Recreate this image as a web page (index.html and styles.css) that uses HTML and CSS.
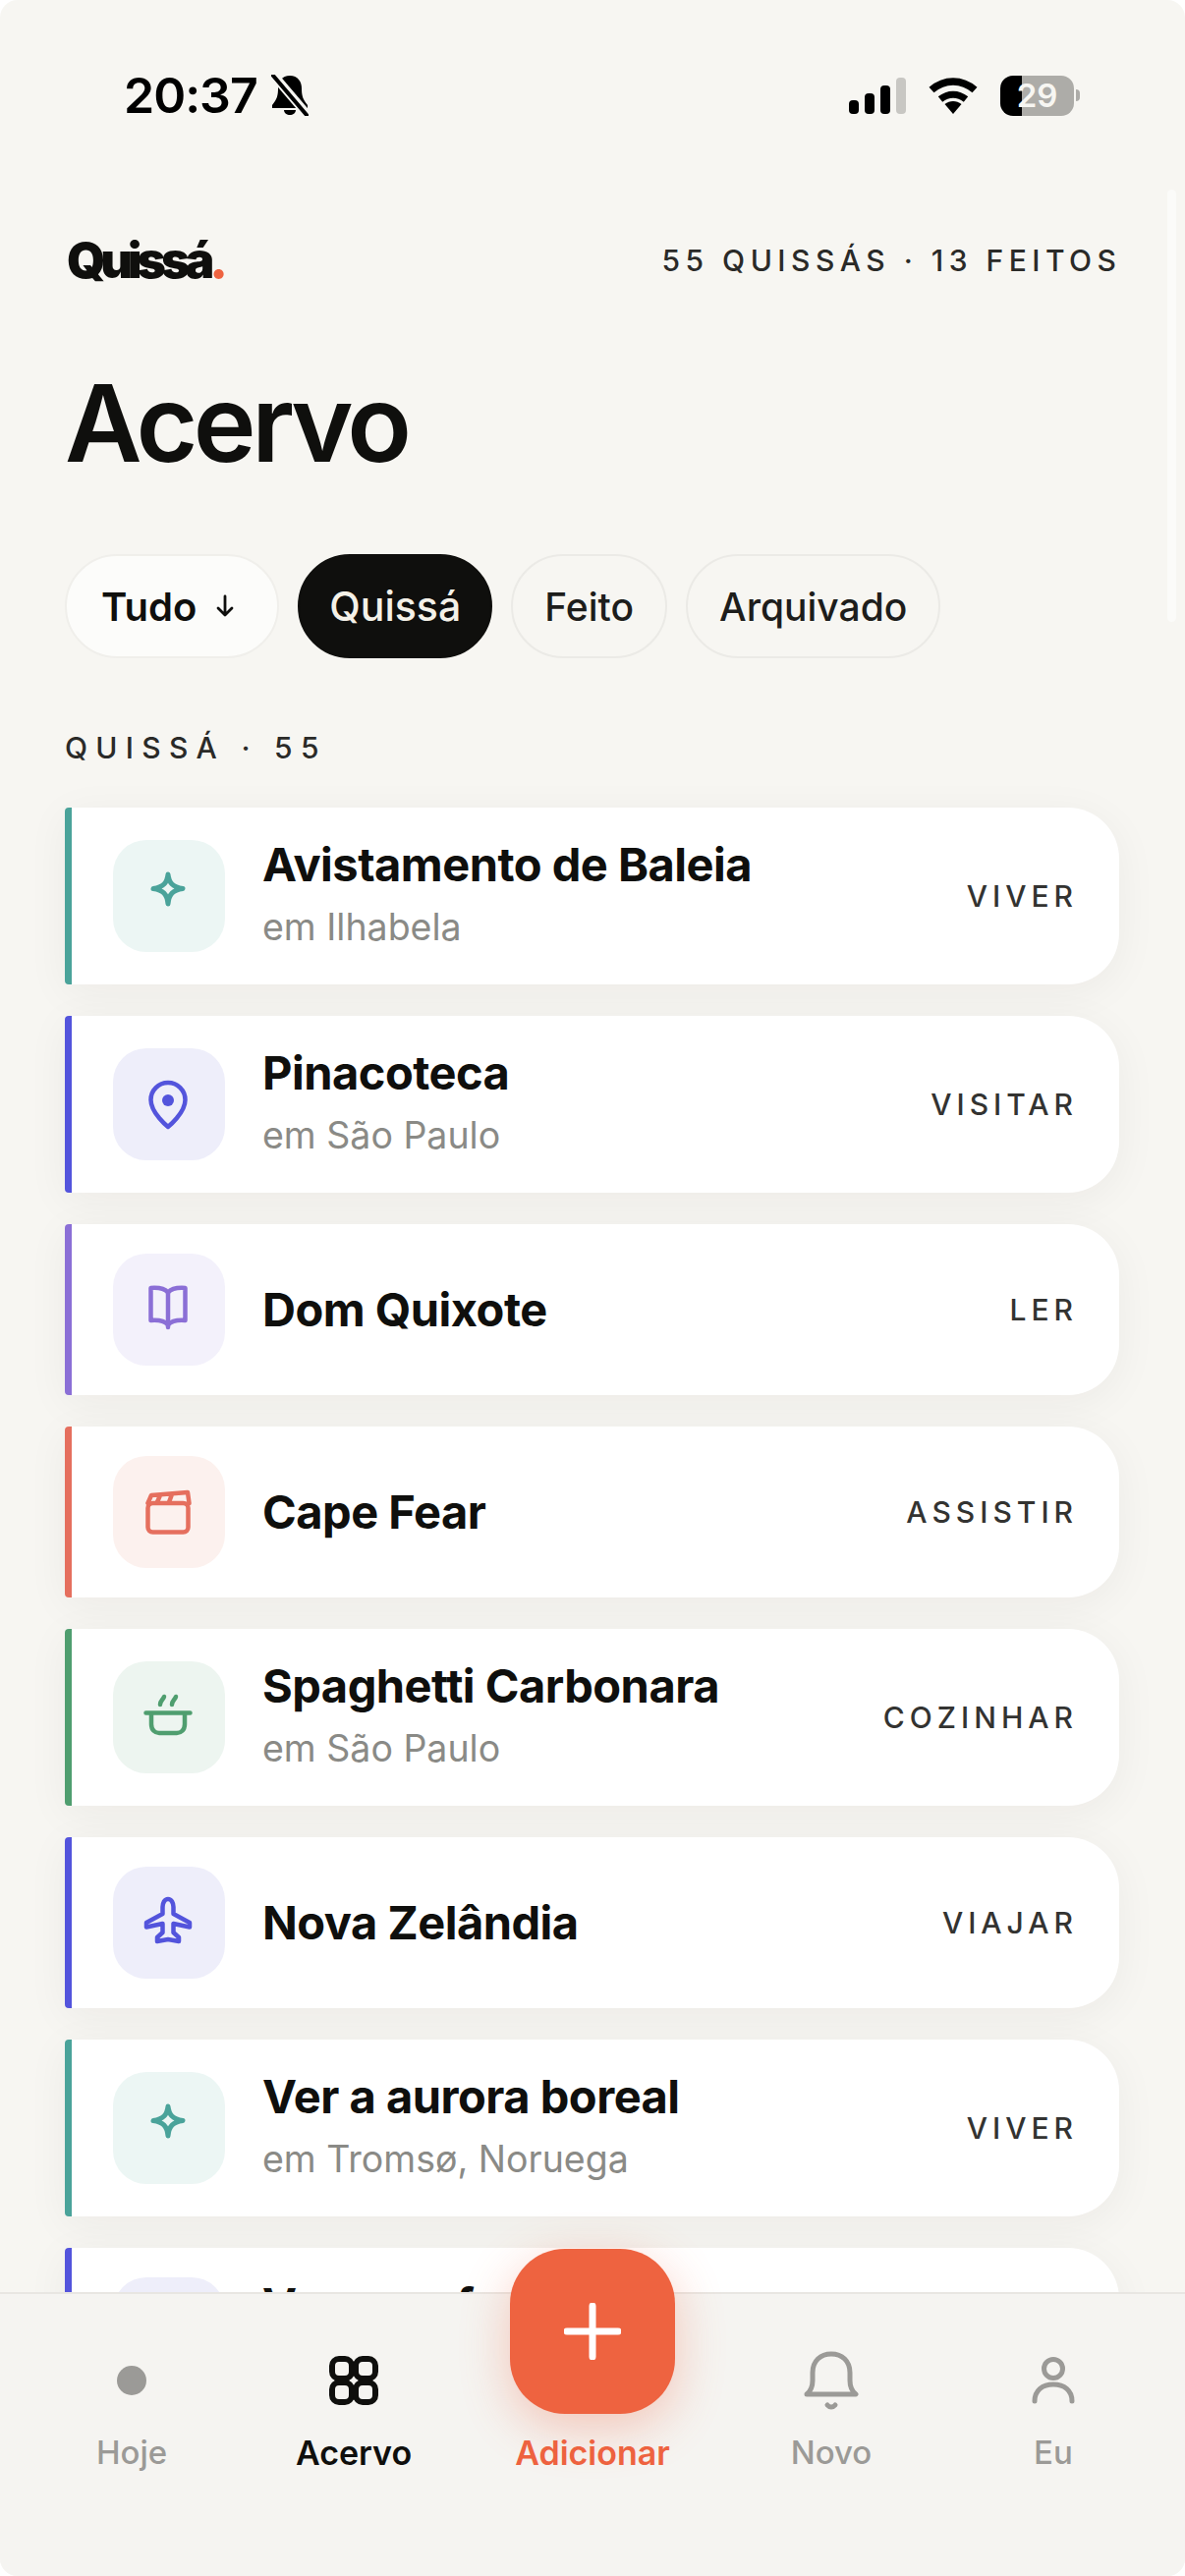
FILE: index.html
```html
<!DOCTYPE html>
<html lang="pt-BR">
<head>
<meta charset="UTF-8">
<title>Acervo</title>
<link rel="stylesheet" href="styles.css">
</head>
<body>
<div class="screen">
  <div class="status">
    <div class="status-left">
      <span class="clock">20:37</span>
      <svg class="muted" width="40" height="42" viewBox="0 0 40 42">
        <path d="M20 1c-8 0-12 6-12 13 0 7-1 11-6 17v3h36v-3c-5-6-6-10-6-17 0-7-4-13-12-13z" fill="#000"/>
        <path d="M14 36h12c0 3-3 5-6 5s-6-2-6-5z" fill="#000"/>
        <path d="M3 0l35 41" stroke="#f7f6f2" stroke-width="9"/>
        <path d="M3 1l34 40" stroke="#000" stroke-width="4" stroke-linecap="round"/>
      </svg>
    </div>
    <div class="status-right">
      <div class="signal">
        <span class="bar bar-1"></span>
        <span class="bar bar-2"></span>
        <span class="bar bar-3"></span>
        <span class="bar bar-4"></span>
      </div>
      <svg width="52" height="38" viewBox="0 0 52 38">
        <path d="M4 13.500c13-11.500 31-11.500 44 0" fill="none" stroke="#000" stroke-width="7.500"/>
        <path d="M13 23c8-6.500 18-6.500 26 0" fill="none" stroke="#000" stroke-width="7"/>
        <path d="M17.500 28c5-4 12-4 17 0L26 38z" fill="#000"/>
      </svg>
      <div class="battery">
        <div class="battery-body">29</div>
        <span class="battery-nub"></span>
      </div>
    </div>
  </div>

  <div class="topbar">
    <div class="logo">Quissá<span class="logo-dot">.</span></div>
    <div class="meta">55 QUISSÁS · 13 FEITOS</div>
  </div>

  <h1 class="page-title">Acervo</h1>

  <div class="chips">
    <div class="chip chip-sort">Tudo
      <svg width="22" height="26" viewBox="0 0 22 26"><path d="M11 3v19M4 15l7 7 7-7" fill="none" stroke="#0f0f0d" stroke-width="2.800" stroke-linecap="round" stroke-linejoin="round"/></svg>
    </div>
    <div class="chip chip-active">Quissá</div>
    <div class="chip">Feito</div>
    <div class="chip">Arquivado</div>
  </div>

  <div class="section-label">QUISSÁ · 55</div>

  <div class="list">
    <div class="card card-teal">
      <div class="card-icon">
        <svg class="icon icon-star" viewBox="0 0 60 60"><path d="M29 8c1 9 5 13 15 14.500-10 1.500-14 5.500-15 15.500-1-10-5-14-15-15.500C24 21 28 17 29 8z"/></svg>
      </div>
      <div class="card-text">
        <div class="card-title">Avistamento de Baleia</div>
        <div class="card-sub">em Ilhabela</div>
      </div>
      <div class="card-tag">VIVER</div>
    </div>

    <div class="card card-indigo">
      <div class="card-icon">
        <svg class="icon" viewBox="0 0 60 60"><path d="M29 53S11.500 39 11.500 25.500a17.500 17.500 0 0 1 35 0C46.500 39 29 53 29 53z"/><circle class="icon-fill" cx="29" cy="26" r="6"/></svg>
      </div>
      <div class="card-text">
        <div class="card-title">Pinacoteca</div>
        <div class="card-sub">em São Paulo</div>
      </div>
      <div class="card-tag">VISITAR</div>
    </div>

    <div class="card card-purple">
      <div class="card-icon">
        <svg class="icon" viewBox="0 0 60 60"><path d="M11.500 8c7-.5 14 .5 17.500 4.500C32.500 8.500 39.500 7.500 46.500 8v33c-7-.5-14 .5-17.500 4.500C25.500 41.500 18.500 40.500 11.500 41z"/><path d="M29 12.500V48"/></svg>
      </div>
      <div class="card-text">
        <div class="card-title">Dom Quixote</div>
      </div>
      <div class="card-tag">LER</div>
    </div>

    <div class="card card-coral">
      <div class="card-icon">
        <svg class="icon" viewBox="0 0 60 60"><rect x="8.500" y="21" width="41" height="29.500" rx="5"/><path d="M8.500 21l3.500-8 37-3 1.500 11M18 20l3-7M30 20l3-8"/></svg>
      </div>
      <div class="card-text">
        <div class="card-title">Cape Fear</div>
      </div>
      <div class="card-tag">ASSISTIR</div>
    </div>

    <div class="card card-green">
      <div class="card-icon">
        <svg class="icon" viewBox="0 0 60 60"><path d="M6.500 25.500h45M12 26v11c0 6 4 9 8 9h18c4 0 8-3 8-9V26M21 17c0-4 3-5 4-8M33 17c0-4 3-5 4-8"/></svg>
      </div>
      <div class="card-text">
        <div class="card-title">Spaghetti Carbonara</div>
        <div class="card-sub">em São Paulo</div>
      </div>
      <div class="card-tag">COZINHAR</div>
    </div>

    <div class="card card-indigo">
      <div class="card-icon">
        <svg class="icon" viewBox="0 0 60 60"><path d="M29 6c3.500 0 5.500 4 5.500 8v7L51 30v4.500L34.500 31v9l5.500 5v4l-11-2-11 2v-4l5.500-5v-9L7 34.500V30l16.500-9v-7c0-4 2-8 5.500-8z"/></svg>
      </div>
      <div class="card-text">
        <div class="card-title">Nova Zelândia</div>
      </div>
      <div class="card-tag">VIAJAR</div>
    </div>

    <div class="card card-teal">
      <div class="card-icon">
        <svg class="icon icon-star" viewBox="0 0 60 60"><path d="M29 8c1 9 5 13 15 14.500-10 1.500-14 5.500-15 15.500-1-10-5-14-15-15.500C24 21 28 17 29 8z"/></svg>
      </div>
      <div class="card-text">
        <div class="card-title">Ver a aurora boreal</div>
        <div class="card-sub">em Tromsø, Noruega</div>
      </div>
      <div class="card-tag">VIVER</div>
    </div>

    <div class="card card-indigo">
      <div class="card-icon"></div>
      <div class="card-text card-text-top">
        <div class="card-title">Voar em família</div>
      </div>
    </div>
  </div>

  <div class="scrollbar"></div>

  <div class="nav">
    <div class="nav-item">
      <div class="nav-icon"><span class="nav-dot"></span></div>
      <span>Hoje</span>
    </div>
    <div class="nav-item nav-item-active">
      <div class="nav-icon">
        <svg width="50" height="50" viewBox="0 0 50 50" fill="none" stroke="#0f0f0d" stroke-width="6">
          <rect x="3" y="3" width="20" height="20" rx="7"/>
          <rect x="27" y="3" width="20" height="20" rx="7"/>
          <rect x="3" y="27" width="20" height="20" rx="7"/>
          <rect x="27" y="27" width="20" height="20" rx="7"/>
        </svg>
      </div>
      <span>Acervo</span>
    </div>
    <div class="nav-item nav-item-add">
      <div class="fab">
        <svg width="58" height="58" viewBox="0 0 58 58"><path d="M29 3v52M3 29h52" stroke="#fff" stroke-width="7" stroke-linecap="round"/></svg>
      </div>
      <div class="nav-icon"></div>
      <span>Adicionar</span>
    </div>
    <div class="nav-item">
      <div class="nav-icon">
        <svg width="56" height="60" viewBox="0 0 56 60" fill="none" stroke="#9b9a97" stroke-width="5" stroke-linecap="round" stroke-linejoin="round">
          <path d="M3 44c5-4 6-8 6-14V22C9 10 17 3 28 3s19 7 19 19v8c0 6 1 10 6 14z"/>
          <path d="M24 55c2 2.500 6 2.500 8 0"/>
        </svg>
      </div>
      <span>Novo</span>
    </div>
    <div class="nav-item">
      <div class="nav-icon">
        <svg width="44" height="48" viewBox="0 0 44 48" fill="none" stroke="#9b9a97" stroke-width="5" stroke-linecap="round">
          <circle cx="22" cy="12" r="9.500"/>
          <path d="M3 45c0-11 8-17 19-17s19 6 19 17"/>
        </svg>
      </div>
      <span>Eu</span>
    </div>
  </div>
</div>
</body>
</html>
```

FILE: styles.css
```css
* { box-sizing: border-box; }
html, body { margin: 0; background: #fff; }
body { font-family: Inter, "Liberation Sans", sans-serif; color: #0f0f0d; }

.screen { position: relative; width: 1206px; height: 2622px; padding: 72px 67px 0 66px; overflow: hidden; background: #f7f6f2; border-radius: 18px; }

.status { display: flex; justify-content: space-between; align-items: center; height: 50px; padding: 0 40px 0 60px; }
.status-left { display: flex; align-items: center; gap: 13px; }
.clock { font-size: 50px; font-weight: 600; letter-spacing: -1px; color: #000; }
.status-right { display: flex; align-items: center; gap: 22px; }
.signal { display: flex; align-items: flex-end; gap: 6px; height: 37px; }
.bar { width: 10px; background: #000; border-radius: 4px; }
.bar-1 { height: 14px; }
.bar-2 { height: 21px; }
.bar-3 { height: 29px; }
.bar-4 { height: 37px; background: #c8c7c3; }
.battery { display: flex; align-items: center; gap: 2px; }
.battery-body { width: 75px; height: 41px; border-radius: 13px; background: linear-gradient(to right, #000 22px, #adaca8 22px); color: #f7f6f2; font-size: 33px; font-weight: 600; line-height: 41px; text-align: center; }
.battery-nub { width: 4px; height: 12px; background: #adaca8; border-radius: 0 4px 4px 0; }

.topbar { display: flex; justify-content: space-between; align-items: center; height: 50px; margin-top: 118px; }
.logo { margin-left: 2px; font-size: 50px; font-weight: 900; letter-spacing: -5px; color: #0f0f0d; }
.logo-dot { color: #ee6340; }
.meta { font-size: 30px; font-weight: 500; letter-spacing: 5.500px; color: #2a2a28; margin-right: -2.500px; }

.page-title { margin: 76px 0 0; font-size: 108px; font-weight: 600; line-height: 130px; letter-spacing: -4.500px; color: #0f0f0d; }

.chips { display: flex; gap: 19px; margin-top: 68px; }
.chip { display: flex; align-items: center; gap: 18px; height: 106px; padding: 0 32px; border: 2px solid #ebeae6; border-radius: 53px; font-size: 39px; font-weight: 500; color: #1d1d1b; }
.chip-sort { background: #fcfcfa; border-color: #f0efeb; padding: 0 42px 0 35px; font-size: 40px; font-weight: 600; color: #0f0f0d; }
.chip-active { background: #0f0f0d; border-color: #0f0f0d; color: #f4f1e8; padding: 0 30px; font-size: 41px; }

.section-label { margin-top: 70px; font-size: 30px; font-weight: 500; letter-spacing: 8.300px; line-height: 42px; color: #2a2a28; }

.list { display: flex; flex-direction: column; gap: 32px; margin-top: 40px; }
.card { display: flex; align-items: center; gap: 38px; flex-shrink: 0; padding: 30px 42px 30px 42px; background: #fff; border-left: 7px solid #5354dc; border-radius: 4px 52px 52px 4px; box-shadow: 0 8px 44px rgba(30, 28, 20, 0.05); }
.card-icon { display: flex; align-items: center; justify-content: center; flex-shrink: 0; width: 114px; height: 114px; border-radius: 34px; background: #eeeefa; }
.icon { width: 60px; height: 60px; fill: none; stroke: #5354dc; stroke-width: 4.500; stroke-linecap: round; stroke-linejoin: round; }
.icon-star { stroke-width: 5; }
.icon-fill { fill: #5354dc; stroke: none; }
.card-text { flex: 1; min-width: 0; }
.card-text-top { align-self: flex-start; white-space: nowrap; }
.card-title { font-size: 47px; font-weight: 700; line-height: 56px; letter-spacing: -0.500px; color: #0f0f0d; }
.card-sub { margin-top: 8px; font-size: 37.500px; line-height: 56px; color: #8a8a86; }
.card-tag { font-size: 30px; font-weight: 500; letter-spacing: 5px; color: #333331; }

.card-teal { border-left-color: #4aa39a; }
.card-teal .card-icon { background: #ecf6f4; }
.card-teal .icon { stroke: #4aa39a; }
.card-indigo { border-left-color: #5354dc; }
.card-purple { border-left-color: #8b6fd6; }
.card-purple .card-icon { background: #f3f1fb; }
.card-purple .icon { stroke: #8b6fd6; }
.card-coral { border-left-color: #e56f5e; }
.card-coral .card-icon { background: #fcf1ee; }
.card-coral .icon { stroke: #e56f5e; }
.card-green { border-left-color: #4f9e6f; }
.card-green .card-icon { background: #edf5f0; }
.card-green .icon { stroke: #4f9e6f; }

.scrollbar { position: absolute; top: 193px; right: 9px; width: 9px; height: 440px; border-radius: 5px; background: #fbfbf9; }

.nav { position: absolute; left: 0; right: 0; bottom: 0; height: 289px; display: grid; grid-template-columns: 268px 184px 302px 184px 268px; padding-top: 54px; background: #f5f4f1; border-top: 2px solid #e8e6e2; }
.nav-item { display: flex; flex-direction: column; align-items: center; font-size: 33px; font-weight: 500; color: #9b9a97; position: relative; }
.nav-item-active { color: #0f0f0d; font-size: 34px; font-weight: 600; }
.nav-item-add { color: #ee6340; font-size: 34px; font-weight: 600; }
.nav-icon { display: flex; align-items: center; justify-content: center; height: 68px; margin-bottom: 19px; }
.nav-dot { width: 30px; height: 30px; border-radius: 50%; background: #9b9a97; }
.fab { position: absolute; top: -100px; left: 67px; display: flex; align-items: center; justify-content: center; width: 168px; height: 168px; border-radius: 56px; background: #ee6340; box-shadow: 0 14px 50px rgba(238, 99, 64, 0.32); }
```
